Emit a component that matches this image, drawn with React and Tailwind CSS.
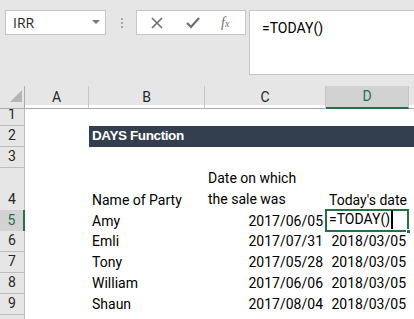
import React from 'react';

const cols = 'grid grid-cols-[25px_64px_116px_121px_83px_1fr]';

const RowHead = ({ n, active }) => (
  <div
    className={
      'flex items-end justify-center pb-[1px] border-b border-r text-[14px] leading-[19px] ' +
      (active
        ? 'bg-[#d2d2d2] border-b-[#ababab] border-r-[#217346] border-r-2 text-[#217346]'
        : 'bg-[#e6e6e6] border-[#bdbdbd] text-[#262626]')
    }
  >
    {n}
  </div>
);

const Cell = ({ children, right, className = '' }) => (
  <div
    className={
      'flex items-end pb-[1px] px-[3px] whitespace-nowrap text-[14px] leading-[20px] text-black ' +
      (right ? 'justify-end ' : '') +
      className
    }
  >
    {children}
  </div>
);

const data = [
  ['Amy', '2017/06/05', null],
  ['Emli', '2017/07/31', '2018/03/05'],
  ['Tony', '2017/05/28', '2018/03/05'],
  ['William', '2017/06/06', '2018/03/05'],
  ['Shaun', '2017/08/04', '2018/03/05'],
];

export default function App() {
  return (
    <div className="w-[414px] h-[319px] overflow-hidden bg-[#e6e6e6] font-['Roboto',sans-serif]">
      {/* formula bar */}
      <div className="h-[86px] flex items-start pt-[10px] pl-[5px]">
        <div className="w-[101px] h-[25px] bg-white border border-[#c6c6c6] flex items-center justify-between pl-[7px] pr-[5px]">
          <span className="text-[14px] text-[#262626] font-['Open_Sans',sans-serif]">IRR</span>
          <svg width="8" height="5" viewBox="0 0 8 5">
            <path d="M0 0 L8 0 L4 4 Z" fill="#7a7a7a" />
          </svg>
        </div>
        <div className="ml-[15px] mt-[8px] flex flex-col gap-[2px]">
          <span className="w-[2px] h-[2px] bg-[#a8a8a8]" />
          <span className="w-[2px] h-[2px] bg-[#a8a8a8]" />
          <span className="w-[2px] h-[2px] bg-[#a8a8a8]" />
        </div>
        <div className="ml-[13px] w-[110px] h-[25px] bg-white border border-[#c6c6c6] flex items-center">
          <svg className="ml-[14px]" width="12" height="12" viewBox="0 0 12 12">
            <path d="M1 1 L11 11 M11 1 L1 11" stroke="#6e6e6e" strokeWidth="1.6" />
          </svg>
          <svg className="ml-[23px]" width="14" height="12" viewBox="0 0 14 12">
            <path d="M1 6 L5 10 L13 1" stroke="#6e6e6e" strokeWidth="2.2" fill="none" />
          </svg>
          <span className="ml-[21px] text-[14px] italic text-[#6e6e6e] font-['Liberation_Serif',serif] leading-none">
            f<span className="text-[10px]">x</span>
          </span>
        </div>
        <div className="ml-[3px] flex-1 h-[65px] bg-white border border-r-0 border-[#c6c6c6] pl-[12px] pt-[5px]">
          <span className="text-[14px] text-black font-['Roboto',sans-serif]">=TODAY()</span>
        </div>
      </div>

      {/* sheet */}
      <div className="bg-white">
        {/* column headers */}
        <div className={cols + ' h-[19px] bg-[#e6e6e6] text-[14px] text-[#262626]'}>
          <div className="relative border-r border-b border-[#ababab]">
            <svg className="absolute left-[10px] top-[4px]" width="12" height="12" viewBox="0 0 12 12">
              <path d="M12 0 L12 12 L0 12 Z" fill="#b5b5b5" />
            </svg>
          </div>
          {['A', 'B', 'C'].map((c) => (
            <div key={c} className="flex items-center justify-center border-r border-r-[#c6c6c6] border-b border-b-[#ababab]">
              {c}
            </div>
          ))}
          <div className="flex items-center justify-center bg-[#d2d2d2] border-r border-r-[#c6c6c6] border-b-2 border-b-[#217346] text-[#217346]">
            D
          </div>
          <div className="border-b border-[#ababab]" />
        </div>

        {/* row 1 */}
        <div className={cols + ' h-[21px]'}>
          <RowHead n="1" />
        </div>
        {/* row 2 */}
        <div className={cols + ' h-[21px]'}>
          <RowHead n="2" />
          <div />
          <div className="col-span-4 bg-[#333f4f] flex items-center pl-[3px]">
            <span className="text-white font-bold text-[13.5px] font-['Liberation_Sans',sans-serif] tracking-[-0.4px]">
              DAYS Function
            </span>
          </div>
        </div>
        {/* row 3 */}
        <div className={cols + ' h-[21px]'}>
          <RowHead n="3" />
        </div>
        {/* row 4 */}
        <div className={cols + ' h-[42px]'}>
          <RowHead n="4" />
          <div />
          <Cell>Name of Party</Cell>
          <div className="flex flex-col justify-end pb-[1px] px-[3px] text-[14px] leading-[21px] text-black">
            <span>Date on which</span>
            <span>the sale was</span>
          </div>
          <Cell>Today's date</Cell>
        </div>
        {data.map(([name, sale, today], i) => (
          <div key={name} className={cols + ' h-[21px]'}>
            <RowHead n={String(i + 5)} active={i === 0} />
            <div />
            <Cell>{name}</Cell>
            <Cell right>{sale}</Cell>
            {today ? (
              <Cell right>{today}</Cell>
            ) : (
              <div className="relative -mt-[1px] -ml-[1px] h-[23px] border-2 border-[#217346] flex items-end pb-[1px] pl-[2px] text-[14px] leading-[20px] text-black">
                =TODAY()
                <span className="ml-[1px] w-[2px] h-[19px] bg-black" />
                <span className="absolute -right-[4px] -bottom-[4px] w-[5px] h-[5px] bg-[#217346] border border-white" />
              </div>
            )}
          </div>
        ))}
        <div className={cols + ' h-[10px]'}>
          <div className="bg-[#e6e6e6] border-r border-[#bdbdbd]" />
        </div>
      </div>
    </div>
  );
}
